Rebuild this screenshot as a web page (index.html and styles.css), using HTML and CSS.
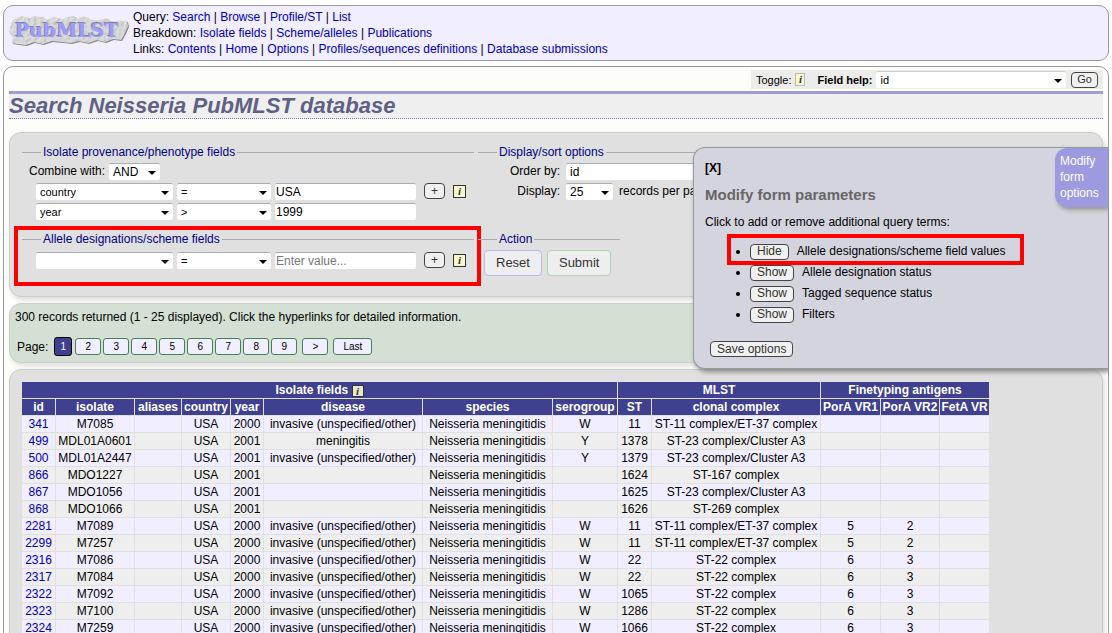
FILE: index.html
```html
<!DOCTYPE html>
<html lang="en">
<head>
<meta charset="utf-8">
<title>Search Neisseria PubMLST database</title>
<link rel="stylesheet" href="styles.css">
</head>
<body>
<header class="banner">
  <svg class="logo" width="120" height="33" viewBox="0 0 120 33" role="img" aria-label="PubMLST">
    <defs>
      <filter id="stone" x="-5%" y="-10%" width="110%" height="120%">
        <feTurbulence type="fractalNoise" baseFrequency="0.3" numOctaves="3" seed="4" result="n"/>
        <feDiffuseLighting in="n" surfaceScale="1" lighting-color="#e0e0e0" result="l"><feDistantLight azimuth="225" elevation="65"/></feDiffuseLighting>
        <feComposite in="l" in2="SourceGraphic" operator="in"/>
      </filter>
    </defs>
    <path fill="#888" d="M3 10L6 6L13 3L22 5L26 3L35 4L39 7L46 4L54 6L60 4L66 3L69 6L76 3L84 7L92 7L98 5L103 8L111 8L119 8L120 13L117 20L113 27L105 26L97 29L89 27L80 30L71 28L63 30L54 29L44 28L35 31L26 29L18 32L10 31L4 30L5 24L1 19Z"/>
    <path fill="#ccc" filter="url(#stone)" d="M2 9L5 5L12 2L21 4L25 2L34 3L38 6L45 3L53 5L59 3L65 2L68 5L75 2L83 6L91 6L97 4L102 7L110 7L118 7L119 12L116 19L112 26L104 25L96 28L88 26L79 29L70 27L62 29L53 28L43 27L34 30L25 28L17 31L9 30L3 29L4 23L0 18Z"/>
    <text class="logo-shade" x="5" y="22">PubMLST</text>
    <text class="logo-text" x="6" y="23">PubMLST</text>
  </svg>
  <nav class="menu">
    <div>Query: <a href="#">Search</a> | <a href="#">Browse</a> | <a href="#">Profile/ST</a> | <a href="#">List</a></div>
    <div>Breakdown: <a href="#">Isolate fields</a> | <a href="#">Scheme/alleles</a> | <a href="#">Publications</a></div>
    <div>Links: <a href="#">Contents</a> | <a href="#">Home</a> | <a href="#">Options</a> | <a href="#">Profiles/sequences definitions</a> | <a href="#">Database submissions</a></div>
  </nav>
</header>
<main class="page">
  <div class="help">
    <span>Toggle:</span><a class="info pale" href="#">i</a>
    <label for="fh">Field help:</label>
    <span class="pick field"><select id="fh"><option>id</option></select></span>
    <button class="small go" type="button">Go</button>
  </div>
  <h1>Search Neisseria PubMLST database</h1>

  <form class="box query">
    <div class="row upper">
      <fieldset class="wide">
        <legend>Isolate provenance/phenotype fields</legend>
        <div class="line"><label for="cw">Combine with:</label><span class="pick and"><select id="cw"><option>AND</option></select></span></div>
        <div class="line inset">
          <span class="pick name"><select aria-label="Field 1"><option>country</option></select></span>
          <span class="pick op"><select aria-label="Operator 1"><option>=</option></select></span>
          <input aria-label="Value 1" value="USA">
          <button class="small plus" type="button">+</button><a class="info" href="#">i</a>
        </div>
        <div class="line inset">
          <span class="pick name"><select aria-label="Field 2"><option>year</option></select></span>
          <span class="pick op"><select aria-label="Operator 2"><option>&gt;</option></select></span>
          <input aria-label="Value 2" value="1999">
        </div>
      </fieldset>
      <fieldset class="sort">
        <legend>Display/sort options</legend>
        <div class="line"><label class="key" for="ob">Order by:</label><span class="pick order"><select id="ob"><option>id</option></select></span></div>
        <div class="line"><label class="key" for="dp">Display:</label><span class="pick count"><select id="dp"><option>25</option></select></span><span>records per page</span></div>
      </fieldset>
    </div>
    <div class="row lower">
      <fieldset class="wide marked">
        <legend>Allele designations/scheme fields</legend>
        <div class="line inset">
          <span class="pick name"><select aria-label="Scheme field"><option></option></select></span>
          <span class="pick op"><select aria-label="Scheme operator"><option>=</option></select></span>
          <input aria-label="Scheme value" placeholder="Enter value...">
          <button class="small plus" type="button">+</button><a class="info" href="#">i</a>
        </div>
      </fieldset>
      <fieldset class="action">
        <legend>Action</legend>
        <div class="buttons"><button class="big reset" type="reset">Reset</button><button class="big submit" type="submit">Submit</button></div>
      </fieldset>
    </div>
  </form>

  <section class="box results">
    <p>300 records returned (1 - 25 displayed). Click the hyperlinks for detailed information.</p>
    <div class="pager"><span>Page:</span><button class="current">1</button><button>2</button><button>3</button><button>4</button><button>5</button><button>6</button><button>7</button><button>8</button><button>9</button><button class="next">&gt;</button><button class="last">Last</button></div>
  </section>

  <section class="box data">
    <table>
      <colgroup><col class="w33"><col class="w78"><col class="w46"><col class="w48"><col class="w32"><col class="w158"><col class="w129"><col class="w64"><col class="w33"><col class="w168"><col class="w59"><col class="w58"><col class="w49"></colgroup>
      <thead>
        <tr><th colspan="8">Isolate fields <a class="info head" href="#">i</a></th><th colspan="2">MLST</th><th colspan="3">Finetyping antigens</th></tr>
        <tr><th>id</th><th>isolate</th><th>aliases</th><th>country</th><th>year</th><th>disease</th><th>species</th><th>serogroup</th><th>ST</th><th>clonal complex</th><th>PorA VR1</th><th>PorA VR2</th><th>FetA VR</th></tr>
      </thead>
      <tbody>
        <tr><td><a href="#">341</a></td><td>M7085</td><td></td><td>USA</td><td>2000</td><td>invasive (unspecified/other)</td><td>Neisseria meningitidis</td><td>W</td><td>11</td><td>ST-11 complex/ET-37 complex</td><td></td><td></td><td></td></tr>
        <tr><td><a href="#">499</a></td><td>MDL01A0601</td><td></td><td>USA</td><td>2001</td><td>meningitis</td><td>Neisseria meningitidis</td><td>Y</td><td>1378</td><td>ST-23 complex/Cluster A3</td><td></td><td></td><td></td></tr>
        <tr><td><a href="#">500</a></td><td>MDL01A2447</td><td></td><td>USA</td><td>2001</td><td>invasive (unspecified/other)</td><td>Neisseria meningitidis</td><td>Y</td><td>1379</td><td>ST-23 complex/Cluster A3</td><td></td><td></td><td></td></tr>
        <tr><td><a href="#">866</a></td><td>MDO1227</td><td></td><td>USA</td><td>2001</td><td></td><td>Neisseria meningitidis</td><td></td><td>1624</td><td>ST-167 complex</td><td></td><td></td><td></td></tr>
        <tr><td><a href="#">867</a></td><td>MDO1056</td><td></td><td>USA</td><td>2001</td><td></td><td>Neisseria meningitidis</td><td></td><td>1625</td><td>ST-23 complex/Cluster A3</td><td></td><td></td><td></td></tr>
        <tr><td><a href="#">868</a></td><td>MDO1066</td><td></td><td>USA</td><td>2001</td><td></td><td>Neisseria meningitidis</td><td></td><td>1626</td><td>ST-269 complex</td><td></td><td></td><td></td></tr>
        <tr><td><a href="#">2281</a></td><td>M7089</td><td></td><td>USA</td><td>2000</td><td>invasive (unspecified/other)</td><td>Neisseria meningitidis</td><td>W</td><td>11</td><td>ST-11 complex/ET-37 complex</td><td>5</td><td>2</td><td></td></tr>
        <tr><td><a href="#">2299</a></td><td>M7257</td><td></td><td>USA</td><td>2000</td><td>invasive (unspecified/other)</td><td>Neisseria meningitidis</td><td>W</td><td>11</td><td>ST-11 complex/ET-37 complex</td><td>5</td><td>2</td><td></td></tr>
        <tr><td><a href="#">2316</a></td><td>M7086</td><td></td><td>USA</td><td>2000</td><td>invasive (unspecified/other)</td><td>Neisseria meningitidis</td><td>W</td><td>22</td><td>ST-22 complex</td><td>6</td><td>3</td><td></td></tr>
        <tr><td><a href="#">2317</a></td><td>M7084</td><td></td><td>USA</td><td>2000</td><td>invasive (unspecified/other)</td><td>Neisseria meningitidis</td><td>W</td><td>22</td><td>ST-22 complex</td><td>6</td><td>3</td><td></td></tr>
        <tr><td><a href="#">2322</a></td><td>M7092</td><td></td><td>USA</td><td>2000</td><td>invasive (unspecified/other)</td><td>Neisseria meningitidis</td><td>W</td><td>1065</td><td>ST-22 complex</td><td>6</td><td>3</td><td></td></tr>
        <tr><td><a href="#">2323</a></td><td>M7100</td><td></td><td>USA</td><td>2000</td><td>invasive (unspecified/other)</td><td>Neisseria meningitidis</td><td>W</td><td>1286</td><td>ST-22 complex</td><td>6</td><td>3</td><td></td></tr>
        <tr><td><a href="#">2324</a></td><td>M7259</td><td></td><td>USA</td><td>2000</td><td>invasive (unspecified/other)</td><td>Neisseria meningitidis</td><td>W</td><td>1066</td><td>ST-22 complex</td><td>6</td><td>3</td><td></td></tr>
      </tbody>
    </table>
  </section>

  <aside class="drawer">
    <a class="close" href="#">[X]</a>
    <h2>Modify form parameters</h2>
    <p>Click to add or remove additional query terms:</p>
    <ul>
      <li class="hot"><button class="small" type="button">Hide</button>Allele designations/scheme field values</li>
      <li><button class="small" type="button">Show</button>Allele designation status</li>
      <li><button class="small" type="button">Show</button>Tagged sequence status</li>
      <li><button class="small" type="button">Show</button>Filters</li>
    </ul>
    <button class="small save" type="button">Save options</button>
    <a class="tab" href="#">Modify<br>form<br>options</a>
  </aside>
</main>
</body>
</html>
```
FILE: styles.css
```css
*, *::after { box-sizing: border-box; }
html { scrollbar-width: none; background: #fff; }
body { margin: 5px 3px 0; font: 12px/16px "Liberation Sans", Arial, sans-serif; color: #000; overflow-x: hidden; }
a { color: #0000b8; text-decoration: none; }
p, h1, h2, ul { margin: 0; padding: 0; }
button, select, input { font: inherit; color: inherit; margin: 0; }

.banner { display: flex; align-items: flex-start; gap: 4px; min-height: 56px; padding: 3px 5px; border: 1px solid #999; border-radius: 10px; background: #f0eeff; }
.logo { margin-top: 5px; flex: none; }
.logo text { font: bold 19px "DejaVu Serif", serif; }
.logo-shade { fill: #85859a; }
.logo-text { fill: #9c9cff; }

.page { position: relative; margin-top: 5px; padding: 3px 5px 12px; border: 1px solid #999; border-radius: 10px; background: #fdfef9; }
.help { display: flex; align-items: center; width: 352px; height: 19px; margin-left: auto; padding: 0 5px; background: #ececea; font-size: 11px; }
.help label { margin: 0 4px 0 12px; font-weight: bold; white-space: nowrap; }
.help .info { margin-left: 4px; }
.field { flex: 1; margin-right: 5px; }

h1 { margin-top: 2px; height: 28px; border-top: 3px solid #a09dd0; border-bottom: 1px dotted #7a78b8; background: #efefef; color: #606085; font: italic bold 22px/24px "Liberation Sans", Arial, sans-serif; }

.box { border: 1px solid #ccc; border-radius: 12px; background: #e0e0e0; box-shadow: 2px 3px 5px #ddd; }
.query { height: 165px; margin-top: 13px; padding: 11px 12px 9px; }
.row { display: flex; gap: 4px; }
.upper { height: 87px; }
fieldset { position: relative; min-width: 0; margin: 0; padding: 1px 0 0; border: 0; border-top: 1px solid #aaa; }
legend { margin-left: 19px; padding: 0 2px; color: #000080; line-height: 16px; }
.wide { width: 452px; }
.sort { flex: 1; }
.action { width: 142px; }
.line { display: flex; align-items: center; height: 20px; gap: 4px; padding-left: 7px; white-space: nowrap; }
.inset { padding-left: 14px; }
.key { width: 75px; text-align: right; }
.sort .line { gap: 6px; }
.lower .line { margin-top: 2px; }

.pick { position: relative; display: block; height: 17px; }
.pick::after { content: ""; position: absolute; right: 4px; top: 8px; border: 4px solid transparent; border-top-color: #000; border-bottom: 0; pointer-events: none; }
.pick select { display: block; width: 100%; height: 17px; padding: 0 4px; border: 0; border-top: 1px solid #abadb3; border-radius: 2px; background: #fff; appearance: none; line-height: 14px; }
.pick.field select { border-top-color: #ccc; }
.name, .op { font-size: 11px; }
.name { width: 137px; }
.op { width: 94px; }
.and { width: 51px; }
.order { width: 200px; }
.count { width: 47px; }
input { width: 141px; height: 17px; padding: 0 1px; border: 0; border-top: 1px solid #abadb3; border-radius: 2px; background: #fff; font-size: 12px; }
input::placeholder { color: #777; }

.small { height: 16px; padding: 0 6px; border: 1px solid #444; border-radius: 4px; background: #f0f0f0; color: #333; font-size: 12px; line-height: 13px; }
.plus { width: 21px; margin: 0 4px; padding: 0; }
.go { font-size: 11px; padding: 0 5px; }
.info { display: inline-block; width: 13px; height: 13px; border: 1px solid #333; background: #f8f6cc; color: #333; font: italic bold 11px/11px "Liberation Serif", serif; text-align: center; }
.pale { width: 10px; border-color: #bbb; }
.head { width: 12px; height: 12px; vertical-align: -1px; line-height: 10px; background: #e8e6cc; }

.buttons { display: flex; gap: 5px; padding: 2px 0 0 6px; }
.big { height: 26px; padding: 0 11px; border: 1px solid #b8b8ee; border-radius: 4px; background: #eee; color: #333; font-size: 13px; }
.submit { border-color: #a8d8a8; }

.marked::after { content: ""; position: absolute; inset: -21px -7px auto -8px; height: 60px; border: 4px solid #f00; pointer-events: none; }

.results { min-height: 60px; margin-top: 6px; padding: 5px; background: #d4e0d4; }
.pager { display: flex; align-items: center; gap: 2px; margin-top: 12px; padding-left: 2px; }
.pager span { margin-right: 4px; }
.pager button { width: 26px; height: 17px; padding: 0; border: 1px solid #468055; border-radius: 3px; background: #f0eeff; color: #000; font-size: 10px; line-height: 14px; }
.pager .current { width: 18px; height: 19px; margin-right: 1px; border-color: #000; background: #404090; color: #fff; }
.pager .next { margin-left: 3px; }
.pager .last { width: 39px; margin-left: 3px; }

.data { margin-top: 6px; padding: 11px; }
table { border-spacing: 1px; white-space: nowrap; }
th, td { height: 16px; padding: 0 1px; text-align: center; line-height: 16px; }
th { background: #404090; color: #fff; }
tbody tr:nth-child(odd) { background: #f0eeff; }
tbody tr:nth-child(even) { background: #eee; }
.w32 { width: 32px; } .w33 { width: 33px; } .w46 { width: 46px; } .w48 { width: 48px; } .w49 { width: 49px; }
.w58 { width: 58px; } .w59 { width: 59px; } .w64 { width: 64px; } .w78 { width: 78px; }
.w129 { width: 129px; } .w158 { width: 158px; } .w168 { width: 168px; }

.drawer { position: absolute; top: 80px; right: 0; width: 415px; padding: 12px 11px 11px; border: 1px solid #999; border-right: 0; border-radius: 12px 0 0 12px; background: #d4d4df; box-shadow: 2px 3px 5px #888; }
.close { color: #000; font-weight: bold; }
h2 { margin-top: 10px; color: #666; font-size: 15px; line-height: 18px; }
.drawer p { margin-top: 10px; }
.drawer ul { margin: 11px 0 0 45px; }
.drawer li { position: relative; height: 21px; line-height: 21px; }
.drawer li .small { margin-right: 8px; }
.hot::after { content: ""; position: absolute; left: -23px; top: -7px; width: 297px; height: 31px; border: 4px solid #f00; pointer-events: none; }
.save { display: block; margin: 16px 0 0 5px; }
.tab { position: absolute; top: 0; right: 0; width: 53px; padding: 5px 5px 6px; border-radius: 12px 0 0 12px; background: #9c9be0; color: #fff; box-shadow: 2px 3px 4px #999; }
```
